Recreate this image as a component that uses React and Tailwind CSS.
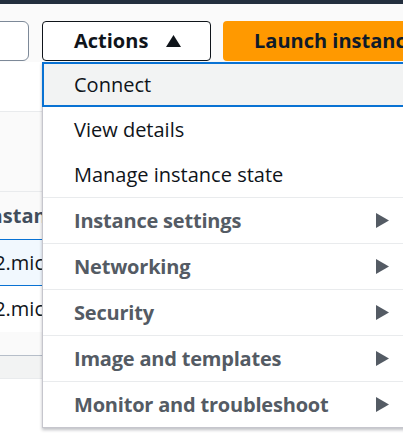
import React from "react";

function RightTri() {
  return (
    <svg width="13" height="15" viewBox="0 0 13 15" className="shrink-0">
      <polygon points="0,0 13,7.5 0,15" fill="#545b64" />
    </svg>
  );
}

function UpTri() {
  return (
    <svg width="15" height="12" viewBox="0 0 15 12" className="shrink-0">
      <polygon points="0,12 7.5,0 15,12" fill="#0f141a" />
    </svg>
  );
}

const plain = ["View details", "Manage instance state"];
const cats = [
  "Instance settings",
  "Networking",
  "Security",
  "Image and templates",
  "Monitor and troubleshoot",
];

export default function App() {
  return (
    <div className="relative w-[403px] h-[442px] overflow-hidden bg-white font-['Open_Sans',sans-serif]">
      <div className="h-[4px] bg-[#232f3e]" />
      <div className="h-[58px] bg-[#fafafa] flex items-start pt-[17px]">
        <div className="w-[60px] h-[40px] -ml-[31px] bg-white border border-[#7d8998] rounded-[6px] shrink-0" />
        <div className="ml-[13px] w-[169px] h-[40px] bg-white border border-[#0f141a] rounded-[4px] flex items-center pl-[31px] shrink-0">
          <span className="text-[20px] font-bold text-[#0f141a] leading-none">Actions</span>
          <span className="ml-[18px]"><UpTri /></span>
        </div>
        <div className="ml-[12px] w-[220px] h-[40px] bg-[#ff9900] rounded-[4px] flex items-center pl-[31px] shrink-0">
          <span className="text-[20px] font-bold text-[#0f1b2a] leading-none whitespace-nowrap">Launch instance</span>
        </div>
      </div>
      <div className="flex flex-col text-[20px]">
        <div className="h-[50px] bg-white border-b border-[#e9ebed]" />
        <div className="h-[80px] bg-[#fafafa] border-b border-[#e9ebed]" />
        <div className="h-[47px] bg-[#fafafa] flex items-center">
          <span className="-ml-[17px] font-bold text-[#414d5c] whitespace-nowrap">Instance type</span>
        </div>
        <div className="h-[47px] bg-[#f1f8fe] border-y border-[#0972d3] flex items-center">
          <span className="-ml-[13px] text-[#0f141a] whitespace-nowrap">t2.micro</span>
        </div>
        <div className="h-[46px] bg-white flex items-center">
          <span className="-ml-[13px] text-[#0f141a] whitespace-nowrap">t2.micro</span>
        </div>
        <div className="h-[24px] bg-[#fafafa] border-b border-[#b6bec9]" />
        <div className="h-[23px] bg-[#f2f3f3] border-b border-[#e9ebed]" />
      </div>

      <div className="absolute top-[62px] left-[42px] w-[380px] bg-white border border-[#c6c6cd] shadow-[0_2px_3px_rgba(0,7,22,0.25)] text-[20px]">
        <div className="h-[45px] -m-[1px] mb-0 bg-[#f2f3f3] border-2 border-[#0972d3] flex items-center pl-[30px] text-[#0f141a]">
          Connect
        </div>
        {plain.map((t) => (
          <div key={t} className="h-[45px] flex items-center pl-[31px] text-[#0f141a]">
            {t}
          </div>
        ))}
        {cats.map((t) => (
          <div
            key={t}
            className="h-[46px] border-t border-[#e9ebed] flex items-center pl-[31px] pr-[32px] font-bold text-[#545b64]"
          >
            <span className="whitespace-nowrap tracking-[-0.2px]">{t}</span>
            <span className="ml-auto"><RightTri /></span>
          </div>
        ))}
      </div>
    </div>
  );
}
